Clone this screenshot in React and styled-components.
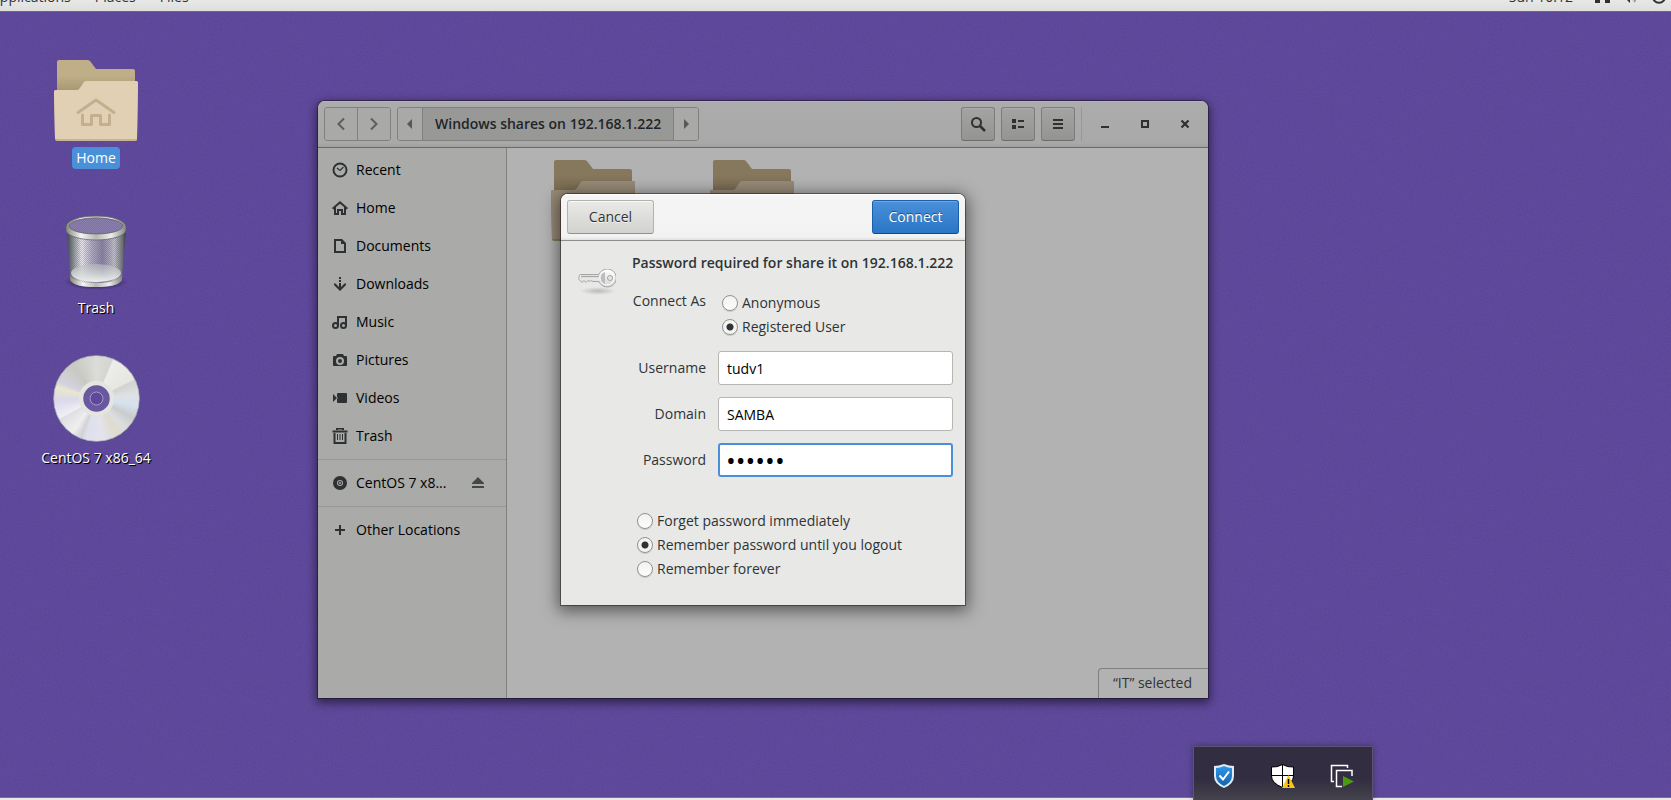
import React from "react";
import styled, { createGlobalStyle, css } from "styled-components";

const Global = createGlobalStyle`
  *, *::before, *::after { box-sizing: border-box; }
  html, body { margin: 0; padding: 0; }
  body {
    font-family: "Open Sans", "Noto Sans", sans-serif;
    font-size: 14px;
    line-height: 20px;
    color: #2e3436;
  }
  button, input { font: inherit; color: inherit; margin: 0; }
`;

const Screen = styled.div`
  display: flex;
  flex-direction: column;
  min-height: 100vh;
  background: #5b4499;
  position: relative;
  overflow: hidden;
`;

const Grain = styled.svg`
  position: absolute;
  inset: 0;
  width: 100%;
  height: 100%;
  opacity: 0.07;
  pointer-events: none;
`;

/* ---------- top panel ---------- */

const TopPanel = styled.header`
  display: flex;
  align-items: flex-end;
  height: 12px;
  overflow: hidden;
  background: linear-gradient(#e8e8e7, #dededd);
  border-bottom: 1px solid #6a6970;
  position: relative;
`;

const PanelMenu = styled.nav`
  display: flex;
  align-items: center;
  gap: 24px;
  height: 28px;
  margin-left: -9px;
`;

const PanelItem = styled.button`
  padding: 0;
  border: 0;
  background: none;
  white-space: nowrap;
`;

const PanelStatus = styled.div`
  display: flex;
  align-items: center;
  gap: 12px;
  height: 28px;
  margin-left: auto;
  padding-right: 4px;
`;

const Clock = styled.time`
  margin-right: 10px;
`;

/* ---------- desktop ---------- */

const Desktop = styled.main`
  flex: 1;
  position: relative;
`;

const Shortcuts = styled.div`
  display: flex;
  flex-direction: column;
  align-items: center;
  width: 192px;
  padding-top: 48px;
`;

const Shortcut = styled.a`
  display: flex;
  flex-direction: column;
  align-items: center;
  gap: 5px;
  height: ${(p) => p.$height}px;
  color: #fff;
  text-decoration: none;
`;

const ShortcutLabel = styled.span`
  padding: 1px 4px;
  border-radius: 4px;
  ${(p) =>
    p.$selected
      ? css`background: #4a90d9;`
      : css`text-shadow: 1px 1px 0 #000, 1px 1px 1px rgba(0, 0, 0, 0.5);`}
`;

/* ---------- file window ---------- */

const Window = styled.section`
  position: absolute;
  top: 89px;
  left: 318px;
  right: 463px;
  min-height: 597px;
  display: flex;
  flex-direction: column;
  border-radius: 7px 7px 0 0;
  background: #b2b2b2;
  box-shadow: 0 0 0 1px rgba(0, 0, 0, 0.35), 0 3px 10px 2px rgba(0, 0, 0, 0.5);
`;

const Frame = styled.div`
  flex: 1;
  display: flex;
  flex-direction: column;
  border-radius: 7px 7px 0 0;
  overflow: hidden;
`;

const TitleBar = styled.div`
  display: flex;
  align-items: center;
  gap: 6px;
  height: 47px;
  padding: 0 6px;
  background: linear-gradient(#acacac, #a9a9a9 42px, #a0a09e);
  border-bottom: 1px solid #6b6b66;
  box-shadow: inset 0 1px 0 #b4b4b4;
  flex: none;
`;

const Linked = styled.div`
  display: flex;
  height: 34px;
  border: 1px solid #80807d;
  border-radius: 3px;
  overflow: hidden;
`;

const LinkedButton = styled.button`
  display: flex;
  align-items: center;
  justify-content: center;
  padding: 0 ${(p) => p.$pad || 0}px;
  min-width: ${(p) => p.$width || 0}px;
  border: 0;
  background: ${(p) => (p.$active ? "#989896" : "#a9a9a8")};
  color: #1f2527;
  font-weight: ${(p) => (p.$active ? 600 : 400)};
  white-space: nowrap;
  & + & { border-left: 1px solid #80807d; }
`;

const ToolButton = styled.button`
  display: flex;
  align-items: center;
  justify-content: center;
  width: 34px;
  height: 34px;
  padding: 0;
  border: 1px solid #7c7c79;
  border-bottom-color: #6c6c69;
  border-radius: 3px;
  background: linear-gradient(#a4a4a2, #949492);
  box-shadow: inset 0 1px 0 #acacaa;
`;

const WindowButton = styled(ToolButton)`
  border-color: transparent;
  background: none;
  box-shadow: none;
`;

const Spacer = styled.div`
  flex: 1;
`;

const TitleDivider = styled.div`
  width: 1px;
  height: 34px;
  background: #989896;
`;

const WindowControls = styled.div`
  display: flex;
  gap: 6px;
`;

const WindowBody = styled.div`
  flex: 1;
  display: flex;
`;

const Sidebar = styled.nav`
  width: 189px;
  flex: none;
  padding-top: 3px;
  background: #aaaaa8;
  border-right: 1px solid #80807d;
`;

const Place = styled.a`
  display: flex;
  align-items: center;
  gap: 8px;
  height: 38px;
  padding: 0 20px 0 14px;
  color: #000;
  text-decoration: none;
`;

const PlaceName = styled.span`
  flex: 1;
  white-space: nowrap;
`;

const Rule = styled.hr`
  margin: 4px 0;
  border: 0;
  height: 1px;
  background: #989896;
`;

const Files = styled.div`
  flex: 1;
  display: flex;
  flex-direction: column;
  justify-content: space-between;
  min-width: 0;
`;

const FileGrid = styled.div`
  display: flex;
  gap: 75px;
  padding: 12px 44px;
`;

const StatusBar = styled.output`
  align-self: flex-end;
  height: 30px;
  padding: 4px 16px 4px 14px;
  border: 1px solid #80807d;
  border-width: 1px 0 0 1px;
  border-radius: 4px 0 0 0;
`;

/* ---------- dialog ---------- */

const Modal = styled.div`
  position: absolute;
  inset: 0;
  display: grid;
  place-items: center;
`;

const Dialog = styled.form`
  width: 404px;
  min-height: 411px;
  border-radius: 7px 7px 0 0;
  background: #e8e8e6;
  box-shadow: 0 0 0 1px rgba(0, 0, 0, 0.4), 0 3px 16px 3px rgba(0, 0, 0, 0.5);
`;

const DialogHeader = styled.div`
  display: flex;
  align-items: center;
  justify-content: space-between;
  height: 47px;
  padding: 0 6px;
  border-radius: 7px 7px 0 0;
  background: linear-gradient(#f5f5f5, #f2f2f2 43px, #dfdfdd);
  border-bottom: 1px solid #8f8f8a;
  box-shadow: inset 0 1px 0 #fff;
`;

const DialogButton = styled.button`
  width: 87px;
  height: 34px;
  padding: 0;
  border-radius: 3px;
  border: 1px solid ${(p) => (p.$primary ? "#1c5fa8" : "#b3b3ae")};
  border-bottom-color: ${(p) => (p.$primary ? "#104a8a" : "#92928d")};
  background: ${(p) =>
    p.$primary ? "linear-gradient(#4a90d9, #2a76c6)" : "linear-gradient(#e9e9e7, #d2d2cf)"};
  box-shadow: inset 0 1px 0 ${(p) => (p.$primary ? "#6ba9e6" : "#fafafa")};
  color: ${(p) => (p.$primary ? "#fff" : "#2e3436")};
  text-shadow: ${(p) => (p.$primary ? "0 -1px rgba(0,0,0,.45)" : "0 1px rgba(255,255,255,.75)")};
`;

const DialogBody = styled.div`
  display: grid;
  grid-template-columns: 38px minmax(0, 1fr);
  column-gap: 16px;
  padding: 12px 12px 24px 17px;
`;

const KeyIcon = styled.svg`
  margin-top: 16px;
`;

const Prompt = styled.h1`
  margin: 0 0 18px;
  font-size: 14px;
  line-height: 20px;
  font-weight: 600;
  white-space: nowrap;
`;

const Fields = styled.div`
  display: grid;
  grid-template-columns: 74px minmax(0, 1fr);
  column-gap: 12px;
  row-gap: 12px;
`;

const FieldLabel = styled.label`
  line-height: 34px;
  text-align: right;
`;

const GroupLabel = styled.span`
  line-height: 20px;
  text-align: right;
  white-space: nowrap;
`;

const TextField = styled.input`
  width: 100%;
  height: 34px;
  padding: 0 8px;
  border: 1px solid #b6b6b3;
  border-radius: 3px;
  background: #fff;
  color: #000;
  outline: 0;
  &[type="password"] {
    padding: 0 6px;
    border: 2px solid #4a90d9;
    font-size: 26px;
  }
`;

const RadioGroup = styled.div`
  display: flex;
  flex-direction: column;
  padding: ${(p) => p.$pad};
`;

const RadioRow = styled.label`
  display: flex;
  align-items: center;
  gap: 4px;
  height: 24px;
  white-space: nowrap;
`;

const Radio = styled.input`
  appearance: none;
  width: 16px;
  height: 16px;
  border: 1px solid #92928d;
  border-radius: 50%;
  background: linear-gradient(#f2f2f1, #fdfdfd);
  box-shadow: 0 1px 0 #c8c8c5;
  &:checked {
    background: radial-gradient(circle at center, #2e3436 0 3px, #f4f4f3 4px);
  }
`;

/* ---------- bottom ---------- */

const BottomPanel = styled.footer`
  height: 3px;
  background: #e9e9e8;
  border-top: 1px solid #77757c;
  position: relative;
`;

const Tray = styled.aside`
  position: absolute;
  right: 298px;
  bottom: 0;
  display: flex;
  align-items: center;
  justify-content: space-around;
  width: 180px;
  height: 54px;
  padding-top: 5px;
  background: linear-gradient(#322d40 60%, #45434c);
  border: 1px solid #5b5470;
  border-bottom: 0;
  box-shadow: 0 0 6px rgba(0, 0, 0, 0.35);
`;

const TrayButton = styled.button`
  display: flex;
  justify-content: center;
  width: 60px;
  padding: 0;
  border: 0;
  background: none;
`;

/* ---------- drawings ---------- */

function Folder({ dim, house }) {
  const back = dim ? "#86785d" : "#c0ae88";
  const shade = dim ? "#776a50" : "#a8966f";
  const front = dim ? "#988a78" : "#e2d0b5";
  const edge = dim ? "#847661" : "#c9b393";
  const id = dim ? "fd" : "fh";
  return (
    <svg width="84" height="82" viewBox="0 0 84 82" aria-hidden="true">
      <defs>
        <linearGradient id={id} x1="0" y1="0" x2="0" y2="1">
          <stop offset="0" stopColor={back} />
          <stop offset="0.2" stopColor={back} />
          <stop offset="0.4" stopColor={shade} />
        </linearGradient>
      </defs>
      <path d="M3 78V2q0-2 2-2h28q2 0 3 1l6 8h37q2 0 2 2v67z" fill={`url(#${id})`} />
      <path d="M1 79 0 32q0-2 2-2h21q2 0 3-2l4-6q1-1 3-1h49q2 0 2 2l-1 57q0 1-2 1H3q-2 0-2-2z" fill={edge} />
      <path d="M1 78 0 32q0-2 2-2h21q2 0 3-2l4-6q1-1 3-1h49q2 0 2 2l-1 55q0 1-2 1H3q-2 0-2-1z" fill={front} />
      {house && (
        <g fill="none" stroke="#c5ae8c" strokeWidth="3" strokeLinecap="round" strokeLinejoin="round">
          <path d="M24 52.500 42 40l18 12.500" />
          <path d="M28.500 55v9.500h9V55.500h9v9h9V55" />
        </g>
      )}
    </svg>
  );
}

function TrashCan() {
  return (
    <svg width="64" height="77" viewBox="0 0 64 77" aria-hidden="true">
      <defs>
        <linearGradient id="can">
          <stop offset="0" stopColor="#3f454b" />
          <stop offset="0.08" stopColor="#777d82" />
          <stop offset="0.25" stopColor="#f4f4f6" stopOpacity="0.95" />
          <stop offset="0.42" stopColor="#b9b5c6" stopOpacity="0.9" />
          <stop offset="0.6" stopColor="#8f8aa3" stopOpacity="0.9" />
          <stop offset="0.8" stopColor="#c9c8d0" stopOpacity="0.95" />
          <stop offset="0.94" stopColor="#6e7376" />
          <stop offset="1" stopColor="#2b3033" />
        </linearGradient>
        <linearGradient id="rim">
          <stop offset="0" stopColor="#83877f" />
          <stop offset="0.25" stopColor="#f4f4f2" />
          <stop offset="0.5" stopColor="#b7b9b4" />
          <stop offset="0.75" stopColor="#eeeeec" />
          <stop offset="1" stopColor="#858882" />
        </linearGradient>
        <linearGradient id="floor" x1="0" y1="0" x2="0" y2="1">
          <stop offset="0" stopColor="#b9bdbd" stopOpacity="0.6" />
          <stop offset="1" stopColor="#eef0ef" />
        </linearGradient>
        <pattern id="mesh" width="2" height="2" patternUnits="userSpaceOnUse">
          <path d="M0 0h1v1H0zM1 1h1v1H1z" fill="#5c4c8c" opacity="0.3" />
        </pattern>
        <radialGradient id="canShadow">
          <stop offset="0.500" stopColor="#000" stopOpacity="0.400" />
          <stop offset="1" stopColor="#000" stopOpacity="0" />
        </radialGradient>
      </defs>
      <ellipse cx="32" cy="67" rx="32" ry="8" fill="url(#canShadow)" />
      <path d="M3 13 6 64q2 8 26 8t26-8l4-51z" fill="url(#can)" />
      <path d="M3 13 6 64q2 8 26 8t26-8l4-51z" fill="url(#mesh)" />
      <ellipse cx="32" cy="58" rx="25" ry="9" fill="url(#floor)" />
      <path d="M6 60q4 8 26 8t26-8v5q-4 7-26 7T6 65z" fill="url(#rim)" />
      <ellipse cx="32" cy="12" rx="28" ry="9" fill="#8b80ae" />
      <ellipse cx="32" cy="12" rx="28" ry="9" fill="url(#mesh)" />
      <path d="M2 12a30 11 0 0 1 60 0v3a30 10 0 0 1-60 0zm3-1a27 8 0 0 0 54 0 27 8 0 0 0-54 0z" fill="url(#rim)" fillRule="evenodd" stroke="#5d615e" strokeWidth="0.700" />
    </svg>
  );
}

const DiscFace = styled.div`
  width: 87px;
  height: 87px;
  border-radius: 50%;
  border: 1px solid #a5a4ae;
  background: conic-gradient(
    #dcdcd8 0deg, #d4d5cf 22deg, #ececea 24deg, #e6e6e3 62deg, #d2d3d0 65deg,
    #dfe1e4 85deg, #d5e2ee 100deg, #c9ccce 118deg, #dddde0 135deg, #dedccb 150deg,
    #e4e2ec 170deg, #dfe0ee 195deg, #d2d2d6 202deg, #efeff0 215deg, #dfdfe2 240deg,
    #f0eff6 242deg, #dad8ea 268deg, #e9e8ce 286deg, #d4d2de 294deg, #c8c9c3 325deg, #dcdcd8 360deg
  );
  mask: radial-gradient(circle, transparent 0 12px, #000 13px);
`;

const DiscHub = styled.svg`
  position: absolute;
  inset: 25px;
`;

const DiscBox = styled.div`
  position: relative;
`;

function Disc() {
  return (
    <DiscBox>
      <DiscFace />
      <DiscHub width="37" height="37" viewBox="0 0 37 37" aria-hidden="true">
        <circle cx="18.500" cy="18.500" r="15.500" fill="none" stroke="#e4e4e0" strokeWidth="4.500" />
        <circle cx="18.500" cy="18.500" r="10" fill="none" stroke="#6a589f" strokeWidth="6.500" />
        <circle cx="18.500" cy="18.500" r="6.500" fill="none" stroke="#a79bc9" />
      </DiscHub>
    </DiscBox>
  );
}

const glyphs = {
  recent: (
    <g fill="none" stroke="currentColor">
      <circle cx="8" cy="8" r="6.500" strokeWidth="2" />
      <path d="m5 6 3 2.500L11.500 5" strokeWidth="1.200" />
    </g>
  ),
  home: (
    <path d="M8 1 0 8l1.300 1.500L2 9v6h5v-4h2v4h5V9l.7.5L16 8zm0 2.700L12 7v6h-1V9H5v4H4V7z" />
  ),
  documents: <path d="M2 1h8l4 4v10H2zm2 2v10h8V6H9V3z" fillRule="evenodd" />,
  downloads: (
    <path d="M7 1h2v2H7zM7 4h2v2H7zM7 7h2v4l3.500-3.500H14V9l-6 6-6-6V7.500h1.500L7 11z" />
  ),
  music: (
    <g fill="none" stroke="currentColor" strokeWidth="2">
      <circle cx="3.500" cy="11.500" r="2.500" />
      <circle cx="11.500" cy="11.500" r="2.500" />
      <path d="M6 12V3h8v9" />
    </g>
  ),
  pictures: (
    <path d="M5 2h6l1 2h2q1 0 1 1v8q0 1-1 1H2q-1 0-1-1V5q0-1 1-1h2zM8 5a4 4 0 1 0 0 8 4 4 0 0 0 0-8zm0 2a2 2 0 1 1 0 4 2 2 0 0 1 0-4z" fillRule="evenodd" />
  ),
  videos: <path d="M1 4l4 4-4 4zM6 3h8q1 0 1 1v8q0 1-1 1H6q-1 0-1-1V9l1-1-1-1V4q0-1 1-1z" />,
  trash: (
    <g fill="none" stroke="currentColor">
      <path d="M.500 3.500h15M5 2V.500h6V2M2.500 5v10h11V5" strokeWidth="2" />
      <path d="M5.500 6v6M8 6v6M10.500 6v6" />
    </g>
  ),
  disc: (
    <path d="M8 1a7 7 0 1 0 0 14A7 7 0 0 0 8 1zm0 4a3 3 0 1 1 0 6 3 3 0 0 1 0-6zm0 1a2 2 0 1 0 0 4 2 2 0 0 0 0-4zm0 1a1 1 0 1 1 0 2 1 1 0 0 1 0-2z" fillRule="evenodd" />
  ),
  plus: <path d="M7 3h2v4h4v2H9v4H7V9H3V7h4z" />,
  eject: <path d="M8 2l6 6v1H2V8zM2 11h12v2H2z" />,
  back: <path d="M11 2.500 5.500 8l5.500 5.500" fill="none" stroke="currentColor" strokeWidth="2" />,
  forward: <path d="M5 2.500 10.500 8 5 13.500" fill="none" stroke="currentColor" strokeWidth="2" />,
  left: <path d="M10 3v10L5 8z" />,
  right: <path d="M6 3v10l5-5z" />,
  search: (
    <g fill="none" stroke="currentColor" strokeWidth="2">
      <circle cx="6.500" cy="6.500" r="4.500" />
      <path d="m10 10 5 5" strokeWidth="2.500" />
    </g>
  ),
  list: <path d="M2 3h4v4H2zM2 9h4v4H2zM8 4h6v2H8zM8 10h6v2H8z" />,
  menu: <path d="M3 3h10v2H3zM3 7h10v2H3zM3 11h10v2H3z" />,
  minimize: <path d="M4 10h8v2H4z" />,
  maximize: <path d="M4 4h8v8H4zm2 2v4h4V6z" fillRule="evenodd" />,
  close: <path d="m4.500 4.500 7 7m0-7-7 7" stroke="currentColor" strokeWidth="2.200" />,
  network: <path d="M0 8h5v6H0zM10 8h5v6h-5zM5 1h6v5H5z" />,
  volume: (
    <>
      <path d="M0 6h3l4-4v12l-4-4H0z" />
      <path d="M9 11q2-3 0-6M11 13q4-5 0-10" fill="none" stroke="#9a9c9b" strokeWidth="2" />
    </>
  ),
  power: (
    <path d="M4.500 3a6 6 0 1 0 7 0M8 1v6" fill="none" stroke="currentColor" strokeWidth="2" />
  ),
};

function Glyph({ name, color = "#2d3133" }) {
  return (
    <svg width="16" height="16" viewBox="0 0 16 16" fill="currentColor" color={color} aria-hidden="true">
      {glyphs[name]}
    </svg>
  );
}

function Key() {
  return (
    <KeyIcon width="38" height="27" viewBox="0 0 38 27" aria-hidden="true">
      <defs>
        <radialGradient id="keyShadow">
          <stop offset="0" stopColor="#000" stopOpacity="0.200" />
          <stop offset="1" stopColor="#000" stopOpacity="0" />
        </radialGradient>
        <linearGradient id="keyMetal" x1="0" y1="0" x2="0" y2="1">
          <stop offset="0" stopColor="#fff" />
          <stop offset="1" stopColor="#d4d4d4" />
        </linearGradient>
      </defs>
      <ellipse cx="20" cy="22" rx="18" ry="4" fill="url(#keyShadow)" />
      <path d="M2 5.500h19a9 9 0 1 1 0 7h-6l-2-1-1 1-2-1-2 2-2-2-2 2-3-3V7z" fill="url(#keyMetal)" stroke="#a6a6a6" />
      <path d="M3 7.500h18" stroke="#a9a9a9" strokeWidth="1.500" />
      <path d="M27 3v12q-5-1-5-6t5-6z" fill="#bcbcbc" />
      <circle cx="29" cy="9" r="7" fill="none" stroke="#fff" />
      <circle cx="32" cy="9" r="2.500" fill="#e8e8e6" stroke="#a2a2a2" />
    </KeyIcon>
  );
}

function BlueShield() {
  return (
    <svg width="22" height="24" viewBox="0 0 22 24" aria-hidden="true">
      <defs>
        <linearGradient id="blue" x1="0" y1="0" x2="0" y2="1">
          <stop offset="0" stopColor="#2f97e6" />
          <stop offset="1" stopColor="#1262b0" />
        </linearGradient>
      </defs>
      <path d="M11 0q5 2 10 2v10q0 8-10 12Q1 20 1 12V2q5 0 10-2z" fill="#dcebf7" />
      <path d="M11 2q4 2 8 2v8q0 6-8 10-8-4-8-10V4q4 0 8-2z" fill="url(#blue)" />
      <path d="m6.500 11.500 3.500 4 6-8" fill="none" stroke="#fff" strokeWidth="2" />
    </svg>
  );
}

function DefenderShield() {
  return (
    <svg width="24" height="24" viewBox="0 0 24 24" aria-hidden="true">
      <path d="M11.500.500q5 3 11 2.500v9q0 7-11 11.500Q.500 19 .500 12V3q6 .500 11-2.500z" fill="#fff" stroke="#000" />
      <path d="M11.500 0v24M0 11.500h23" stroke="#000" />
      <path d="m17.500 11 6.500 13H11z" fill="#fcc419" />
      <path d="M17.500 15v5M17.500 21v2" stroke="#000" strokeWidth="1.500" />
    </svg>
  );
}

function MachineIcon() {
  return (
    <svg width="24" height="24" viewBox="0 0 24 24" aria-hidden="true">
      <path d="M17.500 4V1.500h-16v16H4M22 12V6.500H6.500v16H12" fill="none" stroke="#fff" strokeWidth="1.500" />
      <path d="m13 12 11 5.500L13 23z" fill="#4c9a12" />
    </svg>
  );
}

/* ---------- page ---------- */

const places = [
  ["recent", "Recent"],
  ["home", "Home"],
  ["documents", "Documents"],
  ["downloads", "Downloads"],
  ["music", "Music"],
  ["pictures", "Pictures"],
  ["videos", "Videos"],
  ["trash", "Trash"],
];

function FileWindow() {
  return (
    <Window aria-label="Files">
      <Frame>
        <TitleBar>
          <Linked>
            <LinkedButton $width={32} aria-label="Back"><Glyph name="back" color="#5c5e5e" /></LinkedButton>
            <LinkedButton $width={33} aria-label="Forward"><Glyph name="forward" color="#5c5e5e" /></LinkedButton>
          </Linked>
          <Linked>
            <LinkedButton $width={24} aria-label="Scroll left"><Glyph name="left" color="#555959" /></LinkedButton>
            <LinkedButton $active $pad={12}>Windows shares on 192.168.1.222</LinkedButton>
            <LinkedButton $width={25} aria-label="Scroll right"><Glyph name="right" color="#555959" /></LinkedButton>
          </Linked>
          <Spacer />
          <ToolButton aria-label="Search"><Glyph name="search" /></ToolButton>
          <ToolButton aria-label="View"><Glyph name="list" /></ToolButton>
          <ToolButton aria-label="Menu"><Glyph name="menu" /></ToolButton>
          <TitleDivider />
          <WindowControls>
            <WindowButton aria-label="Minimize"><Glyph name="minimize" /></WindowButton>
            <WindowButton aria-label="Maximize"><Glyph name="maximize" /></WindowButton>
            <WindowButton aria-label="Close"><Glyph name="close" /></WindowButton>
          </WindowControls>
        </TitleBar>
        <WindowBody>
          <Sidebar>
            {places.map(([icon, name]) => (
              <Place href="#" key={icon}>
                <Glyph name={icon} />
                <PlaceName>{name}</PlaceName>
              </Place>
            ))}
            <Rule />
            <Place href="#">
              <Glyph name="disc" />
              <PlaceName>CentOS 7 x8...</PlaceName>
              <Glyph name="eject" color="#43494b" />
            </Place>
            <Rule />
            <Place href="#">
              <Glyph name="plus" />
              <PlaceName>Other Locations</PlaceName>
            </Place>
          </Sidebar>
          <Files>
            <FileGrid>
              <Folder dim />
              <Folder dim />
            </FileGrid>
            <StatusBar>“IT” selected</StatusBar>
          </Files>
        </WindowBody>
      </Frame>
      <Modal>
        <PasswordDialog />
      </Modal>
    </Window>
  );
}

function PasswordDialog() {
  return (
    <Dialog onSubmit={(e) => e.preventDefault()}>
      <DialogHeader>
        <DialogButton type="button">Cancel</DialogButton>
        <DialogButton type="submit" $primary>Connect</DialogButton>
      </DialogHeader>
      <DialogBody>
        <Key />
        <div>
          <Prompt>Password required for share it on 192.168.1.222</Prompt>
          <Fields>
            <GroupLabel id="connect-as">Connect As</GroupLabel>
            <RadioGroup role="radiogroup" aria-labelledby="connect-as" $pad="0 0 0 4px">
              <RadioRow><Radio type="radio" name="as" />Anonymous</RadioRow>
              <RadioRow><Radio type="radio" name="as" defaultChecked />Registered User</RadioRow>
            </RadioGroup>
            <FieldLabel htmlFor="username">Username</FieldLabel>
            <TextField id="username" defaultValue="tudv1" />
            <FieldLabel htmlFor="domain">Domain</FieldLabel>
            <TextField id="domain" defaultValue="SAMBA" />
            <FieldLabel htmlFor="password">Password</FieldLabel>
            <TextField id="password" type="password" defaultValue="secret" />
          </Fields>
          <RadioGroup role="radiogroup" aria-label="Remember" $pad="32px 0 0 5px">
            <RadioRow><Radio type="radio" name="keep" />Forget password immediately</RadioRow>
            <RadioRow><Radio type="radio" name="keep" defaultChecked />Remember password until you logout</RadioRow>
            <RadioRow><Radio type="radio" name="keep" />Remember forever</RadioRow>
          </RadioGroup>
        </div>
      </DialogBody>
    </Dialog>
  );
}

export default function App() {
  return (
    <Screen>
      <Global />
      <Grain aria-hidden="true">
        <filter id="grain">
          <feTurbulence type="fractalNoise" baseFrequency="0.6" numOctaves="2" />
          <feColorMatrix type="saturate" values="0" />
        </filter>
        <rect width="100%" height="100%" filter="url(#grain)" />
      </Grain>
      <TopPanel>
        <PanelMenu>
          <PanelItem>Applications</PanelItem>
          <PanelItem>Places</PanelItem>
          <PanelItem>Files</PanelItem>
        </PanelMenu>
        <PanelStatus>
          <Clock>Sun 10:12</Clock>
          <Glyph name="network" />
          <Glyph name="volume" />
          <Glyph name="power" />
        </PanelStatus>
      </TopPanel>
      <Desktop>
        <Shortcuts>
          <Shortcut href="#" $height={155}>
            <Folder house />
            <ShortcutLabel $selected>Home</ShortcutLabel>
          </Shortcut>
          <Shortcut href="#" $height={140}>
            <TrashCan />
            <ShortcutLabel>Trash</ShortcutLabel>
          </Shortcut>
          <Shortcut href="#" $height={120}>
            <Disc />
            <ShortcutLabel>CentOS 7 x86_64</ShortcutLabel>
          </Shortcut>
        </Shortcuts>
        <FileWindow />
      </Desktop>
      <BottomPanel />
      <Tray>
        <TrayButton aria-label="Protection"><BlueShield /></TrayButton>
        <TrayButton aria-label="Windows Security"><DefenderShield /></TrayButton>
        <TrayButton aria-label="Virtual machine"><MachineIcon /></TrayButton>
      </Tray>
    </Screen>
  );
}
